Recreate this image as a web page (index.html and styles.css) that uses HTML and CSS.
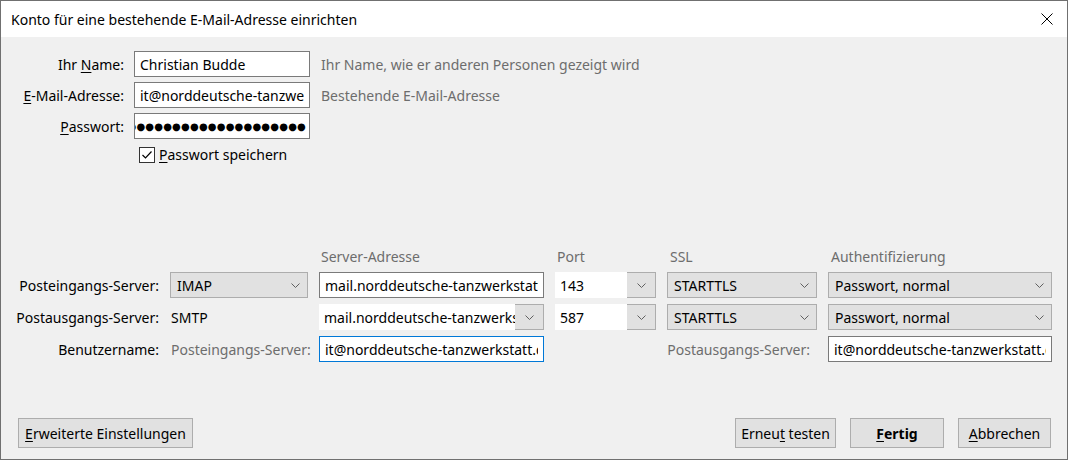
FILE: index.html
```html
<!DOCTYPE html>
<html lang="de">
<head>
<meta charset="UTF-8" />
<title>Konto für eine bestehende E-Mail-Adresse einrichten</title>
<link rel="stylesheet" href="styles.css">
</head>
<body>

<div class="dialog">
  <div class="titlebar">
    <span class="title">Konto für eine bestehende E-Mail-Adresse einrichten</span>
    <svg class="close" width="12" height="12" viewBox="0 0 12 12" aria-label="Schließen">
      <path d="M0.5 0.5 L11.5 11.5 M11.5 0.5 L0.5 11.5" stroke="#000" stroke-width="1" fill="none" />
    </svg>
  </div>

  <div class="content">
    <div class="identity">
      <label class="lbl" for="name">Ihr <u>N</u>ame:</label>
      <input class="field" id="name" type="text" value="Christian Budde">
      <span class="hint">Ihr Name, wie er anderen Personen gezeigt wird</span>

      <label class="lbl" for="mail"><u>E</u>-Mail-Adresse:</label>
      <input class="field" id="mail" type="text" value="it@norddeutsche-tanzwerkstatt.de">
      <span class="hint">Bestehende E-Mail-Adresse</span>

      <label class="lbl" for="pw"><u>P</u>asswort:</label>
      <div class="field password" id="pw"><span>●●●●●●●●●●●●●●●●●●●●</span></div>
      <span></span>

      <span></span>
      <div class="remember">
        <span class="checkbox">
          <svg width="14" height="14" viewBox="0 0 14 14"><path d="M2.5 7 L5.5 10 L11.5 3.5" stroke="#000" stroke-width="1.2" fill="none" /></svg>
        </span>
        <span><u>P</u>asswort speichern</span>
      </div>
    </div>

    <div class="servers">
      <span></span>
      <span></span>
      <span class="colhead">Server-Adresse</span>
      <span class="colhead">Port</span>
      <span class="colhead ssl">SSL</span>
      <span class="colhead auth">Authentifizierung</span>

      <span class="lbl">Posteingangs-Server:</span>
      <div class="select"><span>IMAP</span><svg class="chev" width="9" height="5" viewBox="0 0 9 5"><path d="M0.5 0.5 L4.5 4.5 L8.5 0.5" stroke="#606060" fill="none" /></svg></div>
      <input class="field" type="text" value="mail.norddeutsche-tanzwerkstatt.de">
      <div class="combo"><span class="combo-text">143</span><span class="combo-btn"><svg class="chev" width="9" height="5" viewBox="0 0 9 5"><path d="M0.5 0.5 L4.5 4.5 L8.5 0.5" stroke="#606060" fill="none" /></svg></span></div>
      <div class="select"><span>STARTTLS</span><svg class="chev" width="9" height="5" viewBox="0 0 9 5"><path d="M0.5 0.5 L4.5 4.5 L8.5 0.5" stroke="#606060" fill="none" /></svg></div>
      <div class="select"><span>Passwort, normal</span><svg class="chev" width="9" height="5" viewBox="0 0 9 5"><path d="M0.5 0.5 L4.5 4.5 L8.5 0.5" stroke="#606060" fill="none" /></svg></div>

      <span class="lbl">Postausgangs-Server:</span>
      <span class="plain">SMTP</span>
      <div class="combo"><span class="combo-text">mail.norddeutsche-tanzwerks</span><span class="combo-btn"><svg class="chev" width="9" height="5" viewBox="0 0 9 5"><path d="M0.5 0.5 L4.5 4.5 L8.5 0.5" stroke="#606060" fill="none" /></svg></span></div>
      <div class="combo"><span class="combo-text">587</span><span class="combo-btn"><svg class="chev" width="9" height="5" viewBox="0 0 9 5"><path d="M0.5 0.5 L4.5 4.5 L8.5 0.5" stroke="#606060" fill="none" /></svg></span></div>
      <div class="select"><span>STARTTLS</span><svg class="chev" width="9" height="5" viewBox="0 0 9 5"><path d="M0.5 0.5 L4.5 4.5 L8.5 0.5" stroke="#606060" fill="none" /></svg></div>
      <div class="select"><span>Passwort, normal</span><svg class="chev" width="9" height="5" viewBox="0 0 9 5"><path d="M0.5 0.5 L4.5 4.5 L8.5 0.5" stroke="#606060" fill="none" /></svg></div>

      <span class="lbl">Benutzername:</span>
      <span class="sublbl">Posteingangs-Server:</span>
      <input class="field focused" type="text" value="it@norddeutsche-tanzwerkstatt.de">
      <span class="sublbl out">Postausgangs-Server:</span>
      <input class="field" type="text" value="it@norddeutsche-tanzwerkstatt.de">
    </div>

    <div class="actions">
      <button class="btn wide"><u>E</u>rweiterte Einstellungen</button>
      <span class="spacer"></span>
      <button class="btn retest">Erneu<u>t</u> testen</button>
      <button class="btn done"><u>F</u>ertig</button>
      <button class="btn cancel"><u>A</u>bbrechen</button>
    </div>
  </div>
</div>

</body>
</html>
```

FILE: styles.css
```css
* {
  box-sizing: border-box;
}
body {
  margin: 0;
  background: #fff;
  font-family: "Noto Sans", "Open Sans", sans-serif;
  font-size: 14px;
  color: #000;
}
u {
  text-decoration: underline;
  text-underline-offset: 2px;
}
.dialog {
  width: 1068px;
  height: 460px;
  border: 1px solid #707070;
  display: flex;
  flex-direction: column;
}
.titlebar {
  height: 36px;
  background: #fff;
  display: flex;
  align-items: center;
  justify-content: space-between;
  padding: 0 14px 0 10px;
}
.title {
  font-size: 14px;
}
.content {
  flex: 1;
  background: #f0f0f0;
  display: flex;
  flex-direction: column;
  padding: 14px 16px 11px 0;
}

/* inputs */
.field {
  height: 26px;
  border: 1px solid #7a7a7a;
  background: #fff;
  font: inherit;
  color: #000;
  padding: 0 5px;
  outline: none;
  width: 100%;
}
.field.focused {
  border-color: #0078d7;
}
.password {
  display: flex;
  align-items: center;
  justify-content: flex-end;
  overflow: hidden;
  white-space: nowrap;
  padding: 0 3px 0 0;
  font-family: "DejaVu Sans", sans-serif;
  font-size: 10px;
  letter-spacing: 0.2px;
}
.lbl {
  text-align: right;
  align-self: center;
  white-space: nowrap;
}
.hint, .colhead, .sublbl {
  color: #6d6d6d;
}

/* identity block */
.identity {
  display: grid;
  grid-template-columns: 114px 176px auto;
  grid-auto-rows: 26px;
  column-gap: 10px;
  row-gap: 5px;
  margin-left: 9px;
  align-items: center;
}
.hint {
  margin-left: 1px;
}
.remember {
  display: flex;
  align-items: center;
  gap: 4px;
  padding-left: 5px;
  align-self: start;
  margin-top: 1px;
}
.checkbox {
  width: 16px;
  height: 16px;
  border: 1px solid #333;
  background: #fff;
  display: flex;
  align-items: center;
  justify-content: center;
}

/* server block */
.servers {
  display: grid;
  grid-template-columns: 149px 138px 225px 101px 150px 224px;
  grid-template-rows: 19px 26px 26px 26px;
  column-gap: 11px;
  row-gap: 6px;
  margin: 77px 0 0 9px;
  align-items: center;
}
.colhead {
  padding-left: 2px;
  align-self: end;
}
.colhead.ssl, .colhead.auth {
  padding-left: 3px;
}
.plain {
  padding-left: 1px;
}
.sublbl {
  padding-left: 1px;
  white-space: nowrap;
}
.sublbl.out {
  grid-column: 4 / 6;
  text-align: right;
  padding-right: 7px;
}
.select {
  height: 26px;
  border: 1px solid #adadad;
  background: #e1e1e1;
  display: flex;
  align-items: center;
  justify-content: space-between;
  padding: 0 7px 0 6px;
}
.combo {
  height: 26px;
  border: 1px solid #adadad;
  background: #e1e1e1;
  display: flex;
}
.combo-text {
  flex: 1;
  background: #fff;
  margin: -1px 0 -1px -1px;
  padding: 0 0 0 5px;
  display: flex;
  align-items: center;
  overflow: hidden;
  white-space: nowrap;
}
.combo-btn {
  width: 28px;
  display: flex;
  align-items: center;
  justify-content: center;
}
.chev {
  display: block;
}

/* buttons */
.actions {
  margin-top: auto;
  display: flex;
  gap: 14px;
  padding-left: 17px;
}
.spacer {
  flex: 1;
}
.btn {
  height: 30px;
  border: 1px solid #adadad;
  background: #e1e1e1;
  font: inherit;
  color: #000;
  padding: 0;
}
.btn.wide {
  width: 175px;
}
.btn.retest {
  width: 101px;
}
.btn.done {
  width: 94px;
  font-weight: bold;
}
.btn.cancel {
  width: 93px;
}
```
